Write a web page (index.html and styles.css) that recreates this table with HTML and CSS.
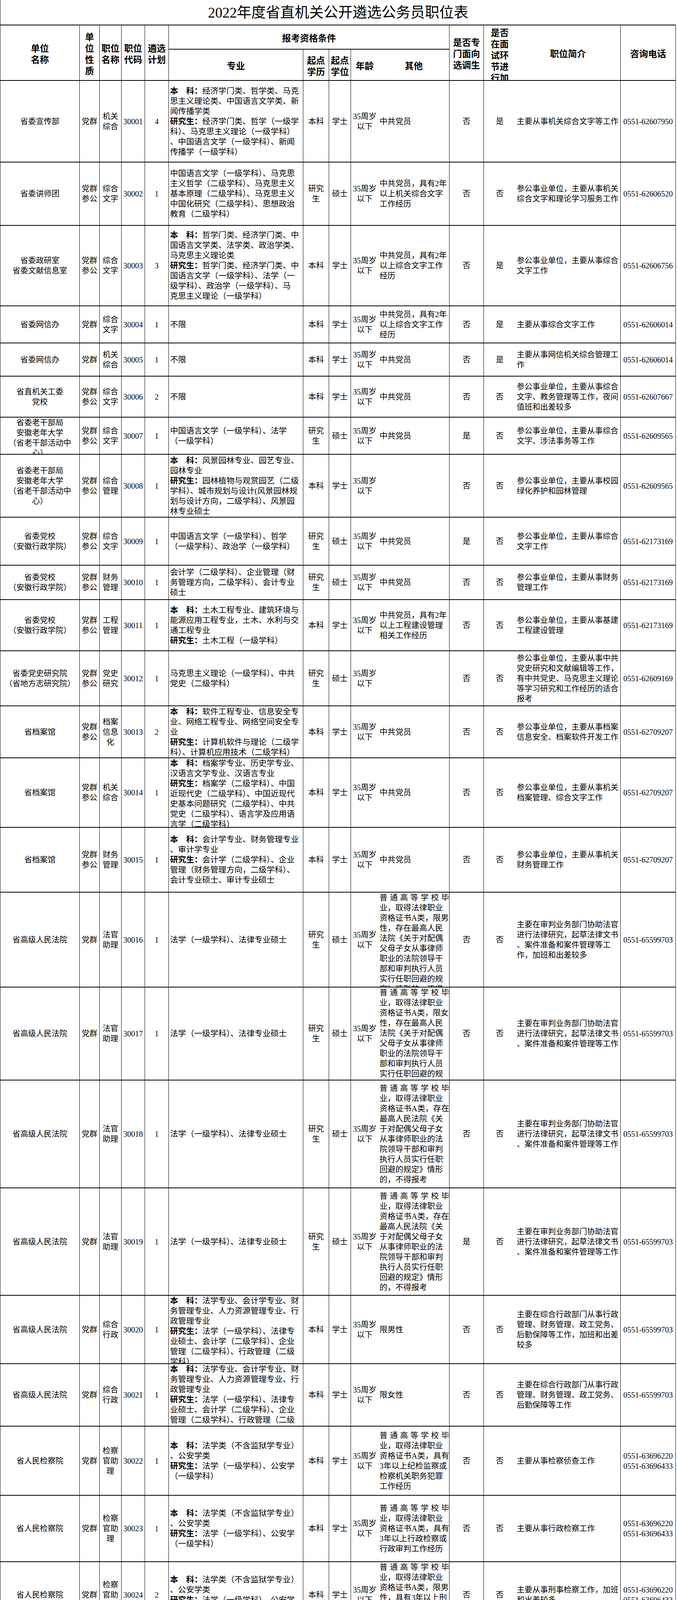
FILE: index.html
```html
<!DOCTYPE html>
<html lang="zh-CN">
<head>
<meta charset="utf-8">
<title>2022年度省直机关公开遴选公务员职位表</title>
<link rel="stylesheet" href="styles.css">
</head>
<body>
<div class="sheet">
  <div class="title">2022年度省直机关公开遴选公务员职位表</div>

  <div class="head">
    <div class="h span2"><p>单位<br>名称</p></div>
    <div class="h span2"><p>单<br>位<br>性<br>质</p></div>
    <div class="h span2"><p>职位<br>名称</p></div>
    <div class="h span2"><p>职位<br>代码</p></div>
    <div class="h span2"><p>遴选<br>计划</p></div>
    <div class="h grp"><p>报考资格条件</p></div>
    <div class="h span2"><p>是否专<br>门面向<br>选调生</p></div>
    <div class="h span2 nb"><p>是否<br>在面<br>试环<br>节进<br>行加</p></div>
    <div class="h span2"><p>职位简介</p></div>
    <div class="h span2"><p>咨询电话</p></div>
    <div class="h r2"><p>专业</p></div>
    <div class="h r2"><p>起点<br>学历</p></div>
    <div class="h r2"><p>起点<br>学位</p></div>
    <div class="h r2 nb"><p>年龄</p></div>
    <div class="h r2"><p>其他</p></div>
  </div>

  <div class="row" style="height:209px">
    <div class="c m"><p>省委宣传部</p></div>
    <div class="c m"><p>党群</p></div>
    <div class="c m"><p>机关<br>综合</p></div>
    <div class="c m"><p>30001</p></div>
    <div class="c m"><p>4</p></div>
    <div class="c l zy"><p><b>本　科：</b>经济学门类、哲学类、马克<br>思主义理论类、中国语言文学类、新<br>闻传播学类<br><b>研究生：</b>经济学门类、哲学（一级学<br>科）、马克思主义理论（一级学科）<br>、中国语言文学（一级学科）、新闻<br>传播学（一级学科）</p></div>
    <div class="c m"><p>本科</p></div>
    <div class="c m"><p>学士</p></div>
    <div class="c m nb"><p>35周岁<br>以下</p></div>
    <div class="c l qt"><p>中共党员</p></div>
    <div class="c m"><p>否</p></div>
    <div class="c m nb"><p>是</p></div>
    <div class="c l jj"><p>主要从事机关综合文字等工作</p></div>
    <div class="c m"><p>0551-62607950</p></div>
  </div>

  <div class="row" style="height:162px">
    <div class="c m"><p>省委讲师团</p></div>
    <div class="c m"><p>党群<br>参公</p></div>
    <div class="c m"><p>综合<br>文字</p></div>
    <div class="c m"><p>30002</p></div>
    <div class="c m"><p>1</p></div>
    <div class="c l zy"><p>中国语言文学（一级学科）、马克思<br>主义哲学（二级学科）、马克思主义<br>基本原理（二级学科）、马克思主义<br>中国化研究（二级学科）、思想政治<br>教育（二级学科）</p></div>
    <div class="c m"><p>研究<br>生</p></div>
    <div class="c m"><p>硕士</p></div>
    <div class="c m nb"><p>35周岁<br>以下</p></div>
    <div class="c l qt"><p>中共党员，具有2年<br>以上机关综合文字<br>工作经历</p></div>
    <div class="c m"><p>否</p></div>
    <div class="c m nb"><p>否</p></div>
    <div class="c l jj"><p>参公事业单位，主要从事机关<br>综合文字和理论学习服务工作</p></div>
    <div class="c m"><p>0551-62606520</p></div>
  </div>

  <div class="row" style="height:206px">
    <div class="c m"><p>省委政研室<br>省委文献信息室</p></div>
    <div class="c m"><p>党群<br>参公</p></div>
    <div class="c m"><p>综合<br>文字</p></div>
    <div class="c m"><p>30003</p></div>
    <div class="c m"><p>3</p></div>
    <div class="c l zy"><p><b>本　科：</b>哲学门类、经济学门类、中<br>国语言文学类、法学类、政治学类、<br>马克思主义理论类<br><b>研究生：</b>哲学门类、经济学门类、中<br>国语言文学（一级学科）、法学（一<br>级学科）、政治学（一级学科）、马<br>克思主义理论（一级学科）</p></div>
    <div class="c m"><p>本科</p></div>
    <div class="c m"><p>学士</p></div>
    <div class="c m nb"><p>35周岁<br>以下</p></div>
    <div class="c l qt"><p>中共党员，具有2年<br>以上综合文字工作<br>经历</p></div>
    <div class="c m"><p>否</p></div>
    <div class="c m nb"><p>是</p></div>
    <div class="c l jj"><p>参公事业单位，主要从事综合<br>文字工作</p></div>
    <div class="c m"><p>0551-62606756</p></div>
  </div>

  <div class="row" style="height:95px">
    <div class="c m"><p>省委网信办</p></div>
    <div class="c m"><p>党群</p></div>
    <div class="c m"><p>综合<br>文字</p></div>
    <div class="c m"><p>30004</p></div>
    <div class="c m"><p>1</p></div>
    <div class="c l zy"><p>不限</p></div>
    <div class="c m"><p>本科</p></div>
    <div class="c m"><p>学士</p></div>
    <div class="c m nb"><p>35周岁<br>以下</p></div>
    <div class="c l qt"><p>中共党员，具有2年<br>以上综合文字工作<br>经历</p></div>
    <div class="c m"><p>否</p></div>
    <div class="c m nb"><p>是</p></div>
    <div class="c l jj"><p>主要从事综合文字工作</p></div>
    <div class="c m"><p>0551-62606014</p></div>
  </div>

  <div class="row" style="height:85px">
    <div class="c m"><p>省委网信办</p></div>
    <div class="c m"><p>党群</p></div>
    <div class="c m"><p>机关<br>综合</p></div>
    <div class="c m"><p>30005</p></div>
    <div class="c m"><p>1</p></div>
    <div class="c l zy"><p>不限</p></div>
    <div class="c m"><p>本科</p></div>
    <div class="c m"><p>学士</p></div>
    <div class="c m nb"><p>35周岁<br>以下</p></div>
    <div class="c l qt"><p>中共党员</p></div>
    <div class="c m"><p>否</p></div>
    <div class="c m nb"><p>是</p></div>
    <div class="c l jj"><p>主要从事网信机关综合管理工<br>作</p></div>
    <div class="c m"><p>0551-62606014</p></div>
  </div>

  <div class="row" style="height:105px">
    <div class="c m"><p>省直机关工委<br>党校</p></div>
    <div class="c m"><p>党群<br>参公</p></div>
    <div class="c m"><p>综合<br>文字</p></div>
    <div class="c m"><p>30006</p></div>
    <div class="c m"><p>2</p></div>
    <div class="c l zy"><p>不限</p></div>
    <div class="c m"><p>本科</p></div>
    <div class="c m"><p>学士</p></div>
    <div class="c m nb"><p>35周岁<br>以下</p></div>
    <div class="c l qt"><p>中共党员</p></div>
    <div class="c m"><p>否</p></div>
    <div class="c m nb"><p>否</p></div>
    <div class="c l jj"><p>参公事业单位，主要从事综合<br>文字、教务管理等工作，夜间<br>值班和出差较多</p></div>
    <div class="c m"><p>0551-62607667</p></div>
  </div>

  <div class="row" style="height:95px">
    <div class="c m"><p>省委老干部局<br>安徽老年大学<br>（省老干部活动中<br>心）</p></div>
    <div class="c m"><p>党群<br>参公</p></div>
    <div class="c m"><p>综合<br>文字</p></div>
    <div class="c m"><p>30007</p></div>
    <div class="c m"><p>1</p></div>
    <div class="c l zy"><p>中国语言文学（一级学科）、法学<br>（一级学科）</p></div>
    <div class="c m"><p>研究<br>生</p></div>
    <div class="c m"><p>硕士</p></div>
    <div class="c m nb"><p>35周岁<br>以下</p></div>
    <div class="c l qt"><p>中共党员</p></div>
    <div class="c m"><p>是</p></div>
    <div class="c m nb"><p>否</p></div>
    <div class="c l jj"><p>参公事业单位，主要从事综合<br>文字、涉法事务等工作</p></div>
    <div class="c m"><p>0551-62609565</p></div>
  </div>

  <div class="row" style="height:161px">
    <div class="c m"><p>省委老干部局<br>安徽老年大学<br>（省老干部活动中<br>心）</p></div>
    <div class="c m"><p>党群<br>参公</p></div>
    <div class="c m"><p>综合<br>管理</p></div>
    <div class="c m"><p>30008</p></div>
    <div class="c m"><p>1</p></div>
    <div class="c l zy"><p><b>本　科：</b>风景园林专业、园艺专业、<br>园林专业<br><b>研究生：</b>园林植物与观赏园艺（二级<br>学科）、城市规划与设计(风景园林规<br>划与设计方向，二级学科）、风景园<br>林专业硕士</p></div>
    <div class="c m"><p>本科</p></div>
    <div class="c m"><p>学士</p></div>
    <div class="c m nb"><p>35周岁<br>以下</p></div>
    <div class="c l qt"></div>
    <div class="c m"><p>否</p></div>
    <div class="c m nb"><p>否</p></div>
    <div class="c l jj"><p>参公事业单位，主要从事校园<br>绿化养护和园林管理</p></div>
    <div class="c m"><p>0551-62609565</p></div>
  </div>

  <div class="row" style="height:123px">
    <div class="c m"><p>省委党校<br>（安徽行政学院）</p></div>
    <div class="c m"><p>党群<br>参公</p></div>
    <div class="c m"><p>综合<br>文字</p></div>
    <div class="c m"><p>30009</p></div>
    <div class="c m"><p>1</p></div>
    <div class="c l zy"><p>中国语言文学（一级学科）、哲学<br>（一级学科）、政治学（一级学科）</p></div>
    <div class="c m"><p>研究<br>生</p></div>
    <div class="c m"><p>硕士</p></div>
    <div class="c m nb"><p>35周岁<br>以下</p></div>
    <div class="c l qt"><p>中共党员</p></div>
    <div class="c m"><p>是</p></div>
    <div class="c m nb"><p>否</p></div>
    <div class="c l jj"><p>参公事业单位，主要从事综合<br>文字工作</p></div>
    <div class="c m"><p>0551-62173169</p></div>
  </div>

  <div class="row" style="height:88px">
    <div class="c m"><p>省委党校<br>（安徽行政学院）</p></div>
    <div class="c m"><p>党群<br>参公</p></div>
    <div class="c m"><p>财务<br>管理</p></div>
    <div class="c m"><p>30010</p></div>
    <div class="c m"><p>1</p></div>
    <div class="c l zy"><p>会计学（二级学科）、企业管理（财<br>务管理方向，二级学科）、会计专业<br>硕士</p></div>
    <div class="c m"><p>研究<br>生</p></div>
    <div class="c m"><p>硕士</p></div>
    <div class="c m nb"><p>35周岁<br>以下</p></div>
    <div class="c l qt"><p>中共党员</p></div>
    <div class="c m"><p>否</p></div>
    <div class="c m nb"><p>否</p></div>
    <div class="c l jj"><p>参公事业单位，主要从事财务<br>管理工作</p></div>
    <div class="c m"><p>0551-62173169</p></div>
  </div>

  <div class="row" style="height:131px">
    <div class="c m"><p>省委党校<br>（安徽行政学院）</p></div>
    <div class="c m"><p>党群<br>参公</p></div>
    <div class="c m"><p>工程<br>管理</p></div>
    <div class="c m"><p>30011</p></div>
    <div class="c m"><p>1</p></div>
    <div class="c l zy"><p><b>本　科：</b>土木工程专业、建筑环境与<br>能源应用工程专业，土木、水利与交<br>通工程专业<br><b>研究生：</b>土木工程（一级学科）</p></div>
    <div class="c m"><p>本科</p></div>
    <div class="c m"><p>学士</p></div>
    <div class="c m nb"><p>35周岁<br>以下</p></div>
    <div class="c l qt"><p>中共党员，具有2年<br>以上工程建设管理<br>相关工作经历</p></div>
    <div class="c m"><p>否</p></div>
    <div class="c m nb"><p>否</p></div>
    <div class="c l jj"><p>参公事业单位，主要从事基建<br>工程建设管理</p></div>
    <div class="c m"><p>0551-62173169</p></div>
  </div>

  <div class="row" style="height:141px">
    <div class="c m"><p>省委党史研究院<br>（省地方志研究院）</p></div>
    <div class="c m"><p>党群<br>参公</p></div>
    <div class="c m"><p>党史<br>研究</p></div>
    <div class="c m"><p>30012</p></div>
    <div class="c m"><p>1</p></div>
    <div class="c l zy"><p>马克思主义理论（一级学科）、中共<br>党史（二级学科）</p></div>
    <div class="c m"><p>研究<br>生</p></div>
    <div class="c m"><p>硕士</p></div>
    <div class="c m nb"><p>35周岁<br>以下</p></div>
    <div class="c l qt"></div>
    <div class="c m"><p>否</p></div>
    <div class="c m nb"><p>否</p></div>
    <div class="c l jj"><p>参公事业单位，主要从事中共<br>党史研究和文献编辑等工作，<br>有中共党史、马克思主义理论<br>等学习研究和工作经历的适合<br>报考</p></div>
    <div class="c m"><p>0551-62609169</p></div>
  </div>

  <div class="row" style="height:133px">
    <div class="c m"><p>省档案馆</p></div>
    <div class="c m"><p>党群<br>参公</p></div>
    <div class="c m"><p>档案<br>信息<br>化</p></div>
    <div class="c m"><p>30013</p></div>
    <div class="c m"><p>2</p></div>
    <div class="c l zy"><p><b>本　科：</b>软件工程专业、信息安全专<br>业、网络工程专业、网络空间安全专<br>业<br><b>研究生：</b>计算机软件与理论（二级学<br>科）、计算机应用技术（二级学科）</p></div>
    <div class="c m"><p>本科</p></div>
    <div class="c m"><p>学士</p></div>
    <div class="c m nb"><p>35周岁<br>以下</p></div>
    <div class="c l qt"><p>中共党员</p></div>
    <div class="c m"><p>否</p></div>
    <div class="c m nb"><p>否</p></div>
    <div class="c l jj"><p>参公事业单位，主要从事档案<br>信息安全、档案软件开发工作</p></div>
    <div class="c m"><p>0551-62709207</p></div>
  </div>

  <div class="row" style="height:178px">
    <div class="c m"><p>省档案馆</p></div>
    <div class="c m"><p>党群<br>参公</p></div>
    <div class="c m"><p>机关<br>综合</p></div>
    <div class="c m"><p>30014</p></div>
    <div class="c m"><p>1</p></div>
    <div class="c l zy"><p><b>本　科：</b>档案学专业、历史学专业、<br>汉语言文学专业、汉语言专业<br><b>研究生：</b>档案学（二级学科）、中国<br>近现代史（二级学科）、中国近现代<br>史基本问题研究（二级学科）、中共<br>党史（二级学科）、语言学及应用语<br>言学（二级学科）</p></div>
    <div class="c m"><p>本科</p></div>
    <div class="c m"><p>学士</p></div>
    <div class="c m nb"><p>35周岁<br>以下</p></div>
    <div class="c l qt"><p>中共党员</p></div>
    <div class="c m"><p>否</p></div>
    <div class="c m nb"><p>否</p></div>
    <div class="c l jj"><p>参公事业单位，主要从事机关<br>档案管理、综合文字工作</p></div>
    <div class="c m"><p>0551-62709207</p></div>
  </div>

  <div class="row" style="height:166px">
    <div class="c m"><p>省档案馆</p></div>
    <div class="c m"><p>党群<br>参公</p></div>
    <div class="c m"><p>财务<br>管理</p></div>
    <div class="c m"><p>30015</p></div>
    <div class="c m"><p>1</p></div>
    <div class="c l zy"><p><b>本　科：</b>会计学专业、财务管理专业<br>、审计学专业<br><b>研究生：</b>会计学（二级学科）、企业<br>管理（财务管理方向，二级学科）、<br>会计专业硕士、审计专业硕士</p></div>
    <div class="c m"><p>本科</p></div>
    <div class="c m"><p>学士</p></div>
    <div class="c m nb"><p>35周岁<br>以下</p></div>
    <div class="c l qt"><p>中共党员</p></div>
    <div class="c m"><p>否</p></div>
    <div class="c m nb"><p>否</p></div>
    <div class="c l jj"><p>参公事业单位，主要从事机关<br>财务管理工作</p></div>
    <div class="c m"><p>0551-62709207</p></div>
  </div>

  <div class="row" style="height:243px">
    <div class="c m"><p>省高级人民法院</p></div>
    <div class="c m"><p>党群</p></div>
    <div class="c m"><p>法官<br>助理</p></div>
    <div class="c m"><p>30016</p></div>
    <div class="c m"><p>1</p></div>
    <div class="c l zy"><p>法学（一级学科）、法律专业硕士</p></div>
    <div class="c m"><p>研究<br>生</p></div>
    <div class="c m"><p>硕士</p></div>
    <div class="c m nb"><p>35周岁<br>以下</p></div>
    <div class="c l qt"><p><span class="jl">普通高等学校毕</span>业，取得法律职业<br>资格证书A类，限男<br>性，存在最高人民<br>法院《关于对配偶<br>父母子女从事律师<br>职业的法院领导干<br>部和审判执行人员<br>实行任职回避的规<br>定》情形的，不得<br>报考</p></div>
    <div class="c m"><p>否</p></div>
    <div class="c m nb"><p>否</p></div>
    <div class="c l jj"><p>主要在审判业务部门协助法官<br>进行法律研究，起草法律文书<br>、案件准备和案件管理等工<br>作，加班和出差较多</p></div>
    <div class="c m"><p>0551-65599703</p></div>
  </div>

  <div class="row" style="height:238px">
    <div class="c m"><p>省高级人民法院</p></div>
    <div class="c m"><p>党群</p></div>
    <div class="c m"><p>法官<br>助理</p></div>
    <div class="c m"><p>30017</p></div>
    <div class="c m"><p>1</p></div>
    <div class="c l zy"><p>法学（一级学科）、法律专业硕士</p></div>
    <div class="c m"><p>研究<br>生</p></div>
    <div class="c m"><p>硕士</p></div>
    <div class="c m nb"><p>35周岁<br>以下</p></div>
    <div class="c l qt"><p><span class="jl">普通高等学校毕</span>业，取得法律职业<br>资格证书A类，限女<br>性，存在最高人民<br>法院《关于对配偶<br>父母子女从事律师<br>职业的法院领导干<br>部和审判执行人员<br>实行任职回避的规<br>定》情形的，不得<br>报考</p></div>
    <div class="c m"><p>否</p></div>
    <div class="c m nb"><p>否</p></div>
    <div class="c l jj"><p>主要在审判业务部门协助法官<br>进行法律研究，起草法律文书<br>、案件准备和案件管理等工作</p></div>
    <div class="c m"><p>0551-65599703</p></div>
  </div>

  <div class="row" style="height:276px">
    <div class="c m"><p>省高级人民法院</p></div>
    <div class="c m"><p>党群</p></div>
    <div class="c m"><p>法官<br>助理</p></div>
    <div class="c m"><p>30018</p></div>
    <div class="c m"><p>1</p></div>
    <div class="c l zy"><p>法学（一级学科）、法律专业硕士</p></div>
    <div class="c m"><p>研究<br>生</p></div>
    <div class="c m"><p>硕士</p></div>
    <div class="c m nb"><p>35周岁<br>以下</p></div>
    <div class="c l qt"><p><span class="jl">普通高等学校毕</span>业，取得法律职业<span class="jl">资格证书A类，存在</span>最高人民法院《关<br>于对配偶父母子女<br>从事律师职业的法<br>院领导干部和审判<br>执行人员实行任职<br>回避的规定》情形<br>的，不得报考</p></div>
    <div class="c m"><p>否</p></div>
    <div class="c m nb"><p>否</p></div>
    <div class="c l jj"><p>主要在审判业务部门协助法官<br>进行法律研究，起草法律文书<br>、案件准备和案件管理等工作</p></div>
    <div class="c m"><p>0551-65599703</p></div>
  </div>

  <div class="row" style="height:275px">
    <div class="c m"><p>省高级人民法院</p></div>
    <div class="c m"><p>党群</p></div>
    <div class="c m"><p>法官<br>助理</p></div>
    <div class="c m"><p>30019</p></div>
    <div class="c m"><p>1</p></div>
    <div class="c l zy"><p>法学（一级学科）、法律专业硕士</p></div>
    <div class="c m"><p>研究<br>生</p></div>
    <div class="c m"><p>硕士</p></div>
    <div class="c m nb"><p>35周岁<br>以下</p></div>
    <div class="c l qt"><p><span class="jl">普通高等学校毕</span>业，取得法律职业<span class="jl">资格证书A类，存在</span>最高人民法院《关<br>于对配偶父母子女<br>从事律师职业的法<br>院领导干部和审判<br>执行人员实行任职<br>回避的规定》情形<br>的，不得报考</p></div>
    <div class="c m"><p>是</p></div>
    <div class="c m nb"><p>否</p></div>
    <div class="c l jj"><p>主要在审判业务部门协助法官<br>进行法律研究，起草法律文书<br>、案件准备和案件管理等工作</p></div>
    <div class="c m"><p>0551-65599703</p></div>
  </div>

  <div class="row" style="height:175px">
    <div class="c m"><p>省高级人民法院</p></div>
    <div class="c m"><p>党群</p></div>
    <div class="c m"><p>综合<br>行政</p></div>
    <div class="c m"><p>30020</p></div>
    <div class="c m"><p>1</p></div>
    <div class="c l zy"><p><b>本　科：</b>法学专业、会计学专业、财<br>务管理专业、人力资源管理专业、行<br>政管理专业<br><b>研究生：</b>法学（一级学科）、法律专<br>业硕士、会计学（二级学科）、企业<br>管理（二级学科）、行政管理（二级<br>学科）</p></div>
    <div class="c m"><p>本科</p></div>
    <div class="c m"><p>学士</p></div>
    <div class="c m nb"><p>35周岁<br>以下</p></div>
    <div class="c l qt"><p>限男性</p></div>
    <div class="c m"><p>否</p></div>
    <div class="c m nb"><p>否</p></div>
    <div class="c l jj"><p>主要在综合行政部门从事行政<br>管理、财务管理、政工党务、<br>后勤保障等工作，加班和出差<br>较多</p></div>
    <div class="c m"><p>0551-65599703</p></div>
  </div>

  <div class="row" style="height:160px">
    <div class="c m"><p>省高级人民法院</p></div>
    <div class="c m"><p>党群</p></div>
    <div class="c m"><p>综合<br>行政</p></div>
    <div class="c m"><p>30021</p></div>
    <div class="c m"><p>1</p></div>
    <div class="c l zy"><p><b>本　科：</b>法学专业、会计学专业、财<br>务管理专业、人力资源管理专业、行<br>政管理专业<br><b>研究生：</b>法学（一级学科）、法律专<br>业硕士、会计学（二级学科）、企业<br>管理（二级学科）、行政管理（二级<br>学科）</p></div>
    <div class="c m"><p>本科</p></div>
    <div class="c m"><p>学士</p></div>
    <div class="c m nb"><p>35周岁<br>以下</p></div>
    <div class="c l qt"><p>限女性</p></div>
    <div class="c m"><p>否</p></div>
    <div class="c m nb"><p>否</p></div>
    <div class="c l jj"><p>主要在综合行政部门从事行政<br>管理、财务管理、政工党务、<br>后勤保障等工作</p></div>
    <div class="c m"><p>0551-65599703</p></div>
  </div>

  <div class="row" style="height:177px">
    <div class="c m"><p>省人民检察院</p></div>
    <div class="c m"><p>党群</p></div>
    <div class="c m"><p>检察<br>官助<br>理</p></div>
    <div class="c m"><p>30022</p></div>
    <div class="c m"><p>1</p></div>
    <div class="c l zy"><p><b>本　科：</b>法学类（不含监狱学专业）<br>、公安学类<br><b>研究生：</b>法学（一级学科）、公安学<br>（一级学科）</p></div>
    <div class="c m"><p>本科</p></div>
    <div class="c m"><p>学士</p></div>
    <div class="c m nb"><p>35周岁<br>以下</p></div>
    <div class="c l qt"><p><span class="jl">普通高等学校毕</span>业，取得法律职业<span class="jl">资格证书A类，具有</span>3年以上纪检监察或<br>检察机关职务犯罪<br>工作经历</p></div>
    <div class="c m"><p>否</p></div>
    <div class="c m nb"><p>否</p></div>
    <div class="c l jj"><p>主要从事检察侦查工作</p></div>
    <div class="c m"><p>0551-63696220<br>0551-63696433</p></div>
  </div>

  <div class="row" style="height:170px">
    <div class="c m"><p>省人民检察院</p></div>
    <div class="c m"><p>党群</p></div>
    <div class="c m"><p>检察<br>官助<br>理</p></div>
    <div class="c m"><p>30023</p></div>
    <div class="c m"><p>1</p></div>
    <div class="c l zy"><p><b>本　科：</b>法学类（不含监狱学专业）<br>、公安学类<br><b>研究生：</b>法学（一级学科）、公安学<br>（一级学科）</p></div>
    <div class="c m"><p>本科</p></div>
    <div class="c m"><p>学士</p></div>
    <div class="c m nb"><p>35周岁<br>以下</p></div>
    <div class="c l qt"><p><span class="jl">普通高等学校毕</span>业，取得法律职业<span class="jl">资格证书A类，具有</span>3年以上行政检察或<br>行政审判工作经历</p></div>
    <div class="c m"><p>否</p></div>
    <div class="c m nb"><p>否</p></div>
    <div class="c l jj"><p>主要从事行政检察工作</p></div>
    <div class="c m"><p>0551-63696220<br>0551-63696433</p></div>
  </div>

  <div class="row" style="height:169px">
    <div class="c m"><p>省人民检察院</p></div>
    <div class="c m"><p>党群</p></div>
    <div class="c m"><p>检察<br>官助<br>理</p></div>
    <div class="c m"><p>30024</p></div>
    <div class="c m"><p>2</p></div>
    <div class="c l zy"><p><b>本　科：</b>法学类（不含监狱学专业）<br>、公安学类<br><b>研究生：</b>法学（一级学科）、公安学<br>（一级学科）</p></div>
    <div class="c m"><p>本科</p></div>
    <div class="c m"><p>学士</p></div>
    <div class="c m nb"><p>35周岁<br>以下</p></div>
    <div class="c l qt"><p><span class="jl">普通高等学校毕</span>业，取得法律职业<br>资格证书A类，限男<br>性，具有3年以上刑<br>事检察或刑事审判<br>或公安部门经济犯<br>罪侦查工作经历</p></div>
    <div class="c m"><p>否</p></div>
    <div class="c m nb"><p>否</p></div>
    <div class="c l jj"><p>主要从事刑事检察工作，加班<br>和出差较多</p></div>
    <div class="c m"><p>0551-63696220<br>0551-63696433</p></div>
  </div>

  <div class="row" style="height:185px">
    <div class="c m"><p>省人民检察院</p></div>
    <div class="c m"><p>党群</p></div>
    <div class="c m"><p>检察<br>官助<br>理</p></div>
    <div class="c m"><p>30025</p></div>
    <div class="c m"><p>2</p></div>
    <div class="c l zy"><p><b>本　科：</b>法学类（不含监狱学专业）<br>、公安学类<br><b>研究生：</b>法学（一级学科）、公安学<br>（一级学科）</p></div>
    <div class="c m"><p>本科</p></div>
    <div class="c m"><p>学士</p></div>
    <div class="c m nb"><p>35周岁<br>以下</p></div>
    <div class="c l qt"><p><span class="jl">普通高等学校毕</span>业，取得法律职业<br>资格证书A类，限女<br>性，具有3年以上刑<br>事检察或刑事审判<br>或公安部门经济犯<br>罪侦查工作经历</p></div>
    <div class="c m"><p>否</p></div>
    <div class="c m nb"><p>否</p></div>
    <div class="c l jj"><p>主要从事刑事检察工作</p></div>
    <div class="c m"><p>0551-63696220<br>0551-63696433</p></div>
  </div>

  <div class="row" style="height:68px">
    <div class="c m"><p>省发展改革委</p></div>
    <div class="c m"><p>行政</p></div>
    <div class="c m"><p>机关<br>综合</p></div>
    <div class="c m"><p>30026</p></div>
    <div class="c m"><p>5</p></div>
    <div class="c l zy"><p>工学门类</p></div>
    <div class="c m"><p>研究<br>生</p></div>
    <div class="c m"><p>硕士</p></div>
    <div class="c m nb"><p>35周岁<br>以下</p></div>
    <div class="c l qt"></div>
    <div class="c m"><p>否</p></div>
    <div class="c m nb"><p>是</p></div>
    <div class="c l jj"><p>主要从事发展改革相关工作</p></div>
    <div class="c m"><p>0551-62601418<br>0551-62603032</p></div>
  </div>

  <div class="row" style="height:58px">
    <div class="c m"><p>省发展改革委</p></div>
    <div class="c m"><p>行政</p></div>
    <div class="c m"><p>机关<br>综合</p></div>
    <div class="c m"><p>30027</p></div>
    <div class="c m"><p>5</p></div>
    <div class="c l zy"><p>理学门类</p></div>
    <div class="c m"><p>研究<br>生</p></div>
    <div class="c m"><p>硕士</p></div>
    <div class="c m nb"><p>35周岁<br>以下</p></div>
    <div class="c l qt"></div>
    <div class="c m"><p>否</p></div>
    <div class="c m nb"><p>是</p></div>
    <div class="c l jj"><p>主要从事发展改革相关工作</p></div>
    <div class="c m"><p>0551-62601418<br>0551-62603032</p></div>
  </div>

  <div class="row" style="height:58px">
    <div class="c m"><p>省发展改革委</p></div>
    <div class="c m"><p>行政</p></div>
    <div class="c m"><p>机关<br>综合</p></div>
    <div class="c m"><p>30028</p></div>
    <div class="c m"><p>1</p></div>
    <div class="c l zy"><p>工学门类、理学门类、法学门类、经<br>济学门类、中国语言文学（一级学<br>科）</p></div>
    <div class="c m"><p>研究<br>生</p></div>
    <div class="c m"><p>硕士</p></div>
    <div class="c m nb"><p>35周岁<br>以下</p></div>
    <div class="c l qt"><p>限男性</p></div>
    <div class="c m"><p>否</p></div>
    <div class="c m nb"><p>是</p></div>
    <div class="c l jj"><p>主要从事发展改革相关工作，<br>加班和出差较多</p></div>
    <div class="c m"><p>0551-62601418<br>0551-62603032</p></div>
  </div>

  <div class="row" style="height:70px">
    <div class="c m"><p>省发展改革委</p></div>
    <div class="c m"><p>行政</p></div>
    <div class="c m"><p>机关<br>综合</p></div>
    <div class="c m"><p>30029</p></div>
    <div class="c m"><p>1</p></div>
    <div class="c l zy"><p>工学门类、理学门类、法学门类、经<br>济学门类、中国语言文学（一级学<br>科）</p></div>
    <div class="c m"><p>研究<br>生</p></div>
    <div class="c m"><p>硕士</p></div>
    <div class="c m nb"><p>35周岁<br>以下</p></div>
    <div class="c l qt"><p>限女性</p></div>
    <div class="c m"><p>否</p></div>
    <div class="c m nb"><p>是</p></div>
    <div class="c l jj"><p>主要从事发展改革相关工作</p></div>
    <div class="c m"><p>0551-62601418<br>0551-62603032</p></div>
  </div>

  <div class="row" style="height:76px">
    <div class="c m"><p>省发展改革委</p></div>
    <div class="c m"><p>行政</p></div>
    <div class="c m"><p>机关<br>综合</p></div>
    <div class="c m"><p>30030</p></div>
    <div class="c m"><p>2</p></div>
    <div class="c l zy"><p>工学门类、理学门类、法学门类、经<br>济学门类、中国语言文学（一级学<br>科）</p></div>
    <div class="c m"><p>研究<br>生</p></div>
    <div class="c m"><p>硕士</p></div>
    <div class="c m nb"><p>35周岁<br>以下</p></div>
    <div class="c l qt"></div>
    <div class="c m"><p>是</p></div>
    <div class="c m nb"><p>是</p></div>
    <div class="c l jj"><p>主要从事发展改革相关工作</p></div>
    <div class="c m"><p>0551-62601418<br>0551-62603032</p></div>
  </div>

  <div class="row" style="height:139px">
    <div class="c m"><p>省发展改革委</p></div>
    <div class="c m"><p>行政</p></div>
    <div class="c m"><p>机关<br>财务</p></div>
    <div class="c m"><p>30031</p></div>
    <div class="c m"><p>1</p></div>
    <div class="c l zy"><p><b>本　科：</b>会计学专业、财务管理专业<br>、审计学专业<br><b>研究生：</b>会计学（二级学科）、企业<br>管理（财务管理方向，二级学科）、<br>会计专业硕士、审计专业硕士</p></div>
    <div class="c m"><p>本科</p></div>
    <div class="c m"><p>学士</p></div>
    <div class="c m nb"><p>40周岁<br>以下</p></div>
    <div class="c l qt"><p>具有2年以上财务工<br>作经历</p></div>
    <div class="c m"><p>否</p></div>
    <div class="c m nb"><p>是</p></div>
    <div class="c l jj"><p>主要从事机关财务工作</p></div>
    <div class="c m"><p>0551-62601418<br>0551-62603032</p></div>
  </div>

  <div class="row" style="height:141px">
    <div class="c m"><p>省粮食和物资储备局</p></div>
    <div class="c m"><p>行政</p></div>
    <div class="c m"><p>信息<br>化管<br>理</p></div>
    <div class="c m"><p>30032</p></div>
    <div class="c m"><p>1</p></div>
    <div class="c l zy"><p><b>本　科：</b>计算机科学与技术专业、软<br>件工程专业、网络工程专业、电子与<br>计算机工程专业<br><b>研究生：</b>信息与通信工程（一级学<br>科）、计算机科学与技术（一级学<br>科）</p></div>
    <div class="c m"><p>本科</p></div>
    <div class="c m"><p>学士</p></div>
    <div class="c m nb"><p>35周岁<br>以下</p></div>
    <div class="c l qt"></div>
    <div class="c m"><p>否</p></div>
    <div class="c m nb"><p>否</p></div>
    <div class="c l jj"><p>主要从事信息化管理等工作</p></div>
    <div class="c m"><p>0551-62870096</p></div>
  </div>

  <div class="row" style="height:71px">
    <div class="c m"><p>省粮食和物资储备局</p></div>
    <div class="c m"><p>行政</p></div>
    <div class="c m"><p>综合<br>管理</p></div>
    <div class="c m"><p>30033</p></div>
    <div class="c m"><p>2</p></div>
    <div class="c l zy"><p>不限</p></div>
    <div class="c m"><p>本科</p></div>
    <div class="c m"><p>学士</p></div>
    <div class="c m nb"><p>35周岁<br>以下</p></div>
    <div class="c l qt"></div>
    <div class="c m"><p>是</p></div>
    <div class="c m nb"><p>否</p></div>
    <div class="c l jj"><p>主要从事机关综合业务工作</p></div>
    <div class="c m"><p>0551-62870096</p></div>
  </div>

  <div class="row" style="height:85px">
    <div class="c m"><p>省能源局</p></div>
    <div class="c m"><p>行政</p></div>
    <div class="c m"><p>综合<br>管理</p></div>
    <div class="c m"><p>30034</p></div>
    <div class="c m"><p>3</p></div>
    <div class="c l zy"><p>能源动力类、电气类、汉语言文学专<br>业、汉语言专业、新闻学专业</p></div>
    <div class="c m"><p>本科</p></div>
    <div class="c m"><p>学士</p></div>
    <div class="c m nb"><p>35周岁<br>以下</p></div>
    <div class="c l qt"><p>中共党员,研究生报<br>考的，本科所学专<br>业须为本职位所设<br>专业</p></div>
    <div class="c m"><p>否</p></div>
    <div class="c m nb"><p>否</p></div>
    <div class="c l jj"><p>主要从事文字综合、能源行业<br>管理工作</p></div>
    <div class="c m"><p>0551-63609479<br>0551-63609487<br>0551-63609416</p></div>
  </div>

  <div class="row" style="height:126px">
    <div class="c m"><p>省教育厅</p></div>
    <div class="c m"><p>行政</p></div>
    <div class="c m"><p>综合<br>管理</p></div>
    <div class="c m"><p>30035</p></div>
    <div class="c m"><p>1</p></div>
    <div class="c l zy"><p>不限</p></div>
    <div class="c m"><p>研究<br>生</p></div>
    <div class="c m"><p>硕士</p></div>
    <div class="c m nb"><p>35周岁<br>以下</p></div>
    <div class="c l qt"><p>中共党员，具有2年<br>以上组织人事或审<br>计、财务工作经历</p></div>
    <div class="c m"><p>否</p></div>
    <div class="c m nb"><p>否</p></div>
    <div class="c l jj"><p>主要从事综合行政管理工作</p></div>
    <div class="c m"><p>0551-62831827</p></div>
  </div>

  <div class="row" style="height:125px">
    <div class="c m"><p>省教育厅</p></div>
    <div class="c m"><p>行政</p></div>
    <div class="c m"><p>综合<br>管理</p></div>
    <div class="c m"><p>30036</p></div>
    <div class="c m"><p>1</p></div>
    <div class="c l zy"><p>教育学（一级学科）</p></div>
    <div class="c m"><p>研究<br>生</p></div>
    <div class="c m"><p>硕士</p></div>
    <div class="c m nb"><p>35周岁<br>以下</p></div>
    <div class="c l qt"><p>中共党员，本科所<br>学专业为教育学类<br>的研究生报考，可<br>不限专业</p></div>
    <div class="c m"><p>是</p></div>
    <div class="c m nb"><p>否</p></div>
    <div class="c l jj"><p>主要从事综合行政管理工作</p></div>
    <div class="c m"><p>0551-62831827</p></div>
  </div>

  <div class="row" style="height:110px">
    <div class="c m"><p>省科技厅</p></div>
    <div class="c m"><p>行政</p></div>
    <div class="c m"><p>科技<br>管理</p></div>
    <div class="c m"><p>30037</p></div>
    <div class="c m"><p>1</p></div>
    <div class="c l zy"><p>区域经济学（二级学科）、产业经济<br>学（二级学科）、统计学（二级学<br>科）、数量经济学（二级学科）</p></div>
    <div class="c m"><p>研究<br>生</p></div>
    <div class="c m"><p>硕士</p></div>
    <div class="c m nb"><p>35周岁<br>以下</p></div>
    <div class="c l qt"></div>
    <div class="c m"><p>否</p></div>
    <div class="c m nb"><p>否</p></div>
    <div class="c l jj"><p>主要从事科技管理工作</p></div>
    <div class="c m"><p>0551-62652302<br>0551-62622831</p></div>
  </div>

  <div class="row" style="height:155px">
    <div class="c m"><p>省民委<br>（省宗教局）</p></div>
    <div class="c m"><p>行政</p></div>
    <div class="c m"><p>综合<br>文字</p></div>
    <div class="c m"><p>30038</p></div>
    <div class="c m"><p>1</p></div>
    <div class="c l zy"><p><b>本　科：</b>中国语言文学类、民族学类<br>、法学专业、宗教学专业<br><b>研究生：</b>中国语言文学（一级学科）<br>、法学（一级学科）、民族学（一级<br>学科）、宗教学（二级学科）</p></div>
    <div class="c m"><p>本科</p></div>
    <div class="c m"><p>学士</p></div>
    <div class="c m nb"><p>35周岁<br>以下</p></div>
    <div class="c l qt"></div>
    <div class="c m"><p>否</p></div>
    <div class="c m nb"><p>否</p></div>
    <div class="c l jj"><p>主要从事机关综合文字工作</p></div>
    <div class="c m"><p>0551-62663041</p></div>
  </div>

  <div class="row" style="height:101px">
    <div class="c m"><p>省公安厅</p></div>
    <div class="c m"><p>行政</p></div>
    <div class="c m"><p>人民<br>警察</p></div>
    <div class="c m"><p>30039</p></div>
    <div class="c m"><p>5</p></div>
    <div class="c l zy"><p><b>本　科：</b>中国语言文学类<br><b>研究生：</b>中国语言文学（一级学科）</p></div>
    <div class="c m"><p>本科</p></div>
    <div class="c m"><p>学士</p></div>
    <div class="c m nb"><p>35周岁<br>以下</p></div>
    <div class="c l qt"><p>面向省内公安机关<br>人民警察</p></div>
    <div class="c m"><p>否</p></div>
    <div class="c m nb"><p>否</p></div>
    <div class="c l jj"><p>主要从事机关综合文字工作，<br>加班较多</p></div>
    <div class="c m"><p>0551-62801242</p></div>
  </div>

  <div class="row tail">
    <div class="c"></div><div class="c"></div><div class="c"></div><div class="c"></div><div class="c"></div>
    <div class="c"></div><div class="c"></div><div class="c"></div><div class="c nb"></div><div class="c"></div>
    <div class="c"></div><div class="c nb"></div><div class="c"></div><div class="c"></div>
  </div>
</div>
</body>
</html>
```

FILE: styles.css
```css
html, body {
  margin: 0;
  padding: 0;
  background: #fff;
}

.sheet {
  width: 1732px;
  height: 5744px;
  overflow: hidden;
  color: #000;
  font-family: "Liberation Serif", "Noto Sans CJK SC", serif;
}

.title {
  box-sizing: border-box;
  width: 1729px;
  height: 63px;
  border-left: 1px solid #000;
  display: flex;
  align-items: center;
  justify-content: center;
  font-family: "Liberation Serif", "Noto Sans CJK SC", serif;
  font-size: 37px;
  line-height: 40px;
  padding-top: 2px;
}

.head,
.row {
  box-sizing: border-box;
  width: 1729px;
  display: grid;
  grid-template-columns: 203px 51px 56px 60px 61px 344px 66px 56px 70px 182px 88px 81px 269px 141px;
  border-left: 1px solid #000;
}

.head {
  height: 144px;
  grid-template-rows: 62px 78px;
  border-top: 2px solid #000;
  border-bottom: 2px solid #000;
  font-family: "Noto Sans CJK SC", sans-serif;
  font-weight: 700;
  font-size: 23px;
  line-height: 29px;
}

.h {
  display: flex;
  overflow: hidden;
  border-right: 1px solid #000;
  text-align: center;
  white-space: nowrap;
  padding-top: 3px;
  box-sizing: border-box;
}

.h > p,
.c > p {
  margin: auto 0;
  width: 100%;
}

.span2 {
  grid-row: 1 / 3;
}

.grp {
  grid-row: 1;
  grid-column: 6 / 11;
  border-bottom: 2px solid #000;
}

.r2 {
  grid-row: 2;
}

.row {
  border-bottom: 2px solid #000;
  font-size: 20px;
  line-height: 26px;
}

.tail {
  height: 8px;
  border-bottom: none;
}

.c {
  display: flex;
  overflow: hidden;
  min-width: 0;
  border-right: 1px solid #000;
  white-space: nowrap;
  box-sizing: border-box;
}

.nb {
  border-right: none;
}

.m {
  text-align: center;
  padding: 0 1px;
}

.l {
  text-align: left;
  padding: 0 1px 0 3px;
}

.zy {
  font-size: 20.6px;
}

.zy b {
  font-weight: 700;
}

.qt {
  font-size: 20.3px;
  padding-right: 0;
}

.jj {
  padding-left: 3px;
}

.jl {
  display: block;
  white-space: normal;
  text-align: justify;
  text-align-last: justify;
}
```
